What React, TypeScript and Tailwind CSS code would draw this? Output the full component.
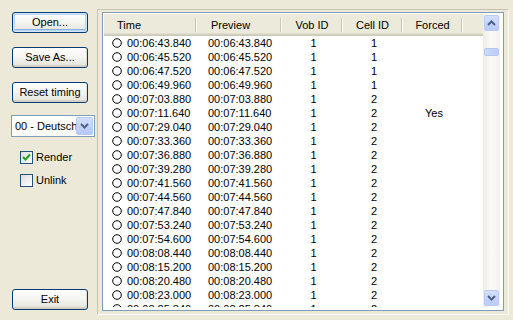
import React from "react";

const rows: [string, string, string, string][] = [
  ["00:06:43.840", "1", "1", ""],
  ["00:06:45.520", "1", "1", ""],
  ["00:06:47.520", "1", "1", ""],
  ["00:06:49.960", "1", "1", ""],
  ["00:07:03.880", "1", "2", ""],
  ["00:07:11.640", "1", "2", "Yes"],
  ["00:07:29.040", "1", "2", ""],
  ["00:07:33.360", "1", "2", ""],
  ["00:07:36.880", "1", "2", ""],
  ["00:07:39.280", "1", "2", ""],
  ["00:07:41.560", "1", "2", ""],
  ["00:07:44.560", "1", "2", ""],
  ["00:07:47.840", "1", "2", ""],
  ["00:07:53.240", "1", "2", ""],
  ["00:07:54.600", "1", "2", ""],
  ["00:08:08.440", "1", "2", ""],
  ["00:08:15.200", "1", "2", ""],
  ["00:08:20.480", "1", "2", ""],
  ["00:08:23.000", "1", "2", ""],
  ["00:08:25.840", "1", "2", ""],
];

function XPButton({ label, isDefault }: { label: string; isDefault?: boolean }) {
  return (
    <button
      className={
        "flex h-[21px] w-[76px] items-center justify-center rounded-[3px] border border-[#003C74] bg-gradient-to-b from-[#FFFFFF] via-[#F4F4F0] to-[#E3E2DA] text-[11px] leading-none text-black " +
        (isDefault
          ? "shadow-[inset_0_0_0_1px_#CEE7FF,inset_0_0_0_2px_#BCD4F6,inset_0_-1px_0_2px_#89ADE4]"
          : "shadow-[inset_0_-2px_0_#D6D0C5,inset_-1px_0_0_#E2DFD6]")
      }
    >
      {label}
    </button>
  );
}

function ChevronUp() {
  return (
    <svg width="9" height="6" viewBox="0 0 9 6">
      <polyline points="1,5 4.5,1.5 8,5" fill="none" stroke="#4D6185" strokeWidth="2" />
    </svg>
  );
}

function ChevronDown() {
  return (
    <svg width="9" height="6" viewBox="0 0 9 6">
      <polyline points="1,1 4.5,4.5 8,1" fill="none" stroke="#4D6185" strokeWidth="2" />
    </svg>
  );
}

function Checkbox({ label, checked }: { label: string; checked?: boolean }) {
  return (
    <div className="flex h-[13px] items-center">
      <div className="flex h-[13px] w-[13px] items-center justify-center border border-[#1C5180] bg-gradient-to-br from-[#DCDCD7] to-[#FFFFFF]">
        {checked && (
          <svg width="9" height="9" viewBox="0 0 9 9">
            <path d="M1 4 L3.5 6.5 L8 1.5" fill="none" stroke="#21A121" strokeWidth="2" />
          </svg>
        )}
      </div>
      <span className="ml-[3px] text-[11px] leading-none text-black">{label}</span>
    </div>
  );
}

function HeaderCell({ w, label, center }: { w: string; label: string; center?: boolean }) {
  return (
    <div className={"flex h-full shrink-0 items-center " + w}>
      <div className={"flex-1 " + (center ? "text-center" : "pl-[13px]")}>{label}</div>
      <div className="flex h-[14px] w-[3px] shrink-0">
        <div className="w-[1px] bg-[#C7C5B2]" />
        <div className="w-[1px] bg-[#FFFFFF]" />
        <div className="w-[1px]" />
      </div>
    </div>
  );
}

export default function App() {
  return (
    <div
      className="flex h-[320px] w-[513px] overflow-hidden bg-[#ECE9D8] text-black"
      style={{ fontFamily: '"Liberation Sans", Arial, sans-serif' }}
    >
      {/* Left column */}
      <div className="flex h-full w-[97px] shrink-0 flex-col pl-[12px] pt-[12px] pb-[10px]">
        <XPButton label="Open..." isDefault />
        <div className="mt-[14px]">
          <XPButton label="Save As..." />
        </div>
        <div className="mt-[14px]">
          <XPButton label="Reset timing" />
        </div>
        <div className="ml-[-1px] mt-[12px] flex h-[22px] w-[84px] items-center border border-[#7F9DB9] bg-white p-[1px]">
          <div className="flex-1 overflow-hidden whitespace-nowrap pl-[2px] text-[11px] leading-none">00 - Deutsch</div>
          <div className="flex h-[18px] w-[17px] shrink-0 items-center justify-center rounded-[2px] border border-[#B9CBF3] bg-gradient-to-b from-[#D2DEFB] to-[#B4C8F6]">
            <ChevronDown />
          </div>
        </div>
        <div className="ml-[8px] mt-[14px] flex flex-col gap-[10px]">
          <Checkbox label="Render" checked />
          <Checkbox label="Unlink" />
        </div>
        <div className="mt-auto">
          <XPButton label="Exit" />
        </div>
      </div>

      {/* Right area */}
      <div className="pt-[9px]">
        <div className="h-[306px] w-[412px] border border-t-[#C5C2B2] border-l-[#C5C2B2] border-r-white border-b-white pl-[4px] pr-[4px] pt-[2px] pb-[3px]">
          <div className="h-[299px] w-[402px] border border-[#7F9DB9] bg-white pl-[1px] pt-[1px] pr-[3px] pb-[3px]">
            <div className="flex h-[293px] w-[396px] text-[11px] leading-none">
              {/* list */}
              <div className="flex w-[379px] flex-col overflow-hidden">
                <div className="flex h-[22px] shrink-0 bg-[#EBEADB] shadow-[inset_0_-1px_0_#CBC7B8,inset_0_-2px_0_#D6D2C2,inset_0_-3px_0_#E2DECD]">
                  <HeaderCell w="w-[94px]" label="Time" />
                  <HeaderCell w="w-[85px]" label="Preview" />
                  <HeaderCell w="w-[61px]" label="Vob ID" center />
                  <HeaderCell w="w-[60px]" label="Cell ID" center />
                  <HeaderCell w="w-[60px]" label="Forced" center />
                </div>
                <div className="flex flex-col">
                  {rows.map((r, i) => (
                    <div key={i} className="flex h-[14px] shrink-0 items-center">
                      <div className="flex w-[94px] shrink-0 items-center pl-[8px]">
                        <svg width="10" height="10" viewBox="0 0 10 10" className="shrink-0">
                          <circle cx="5" cy="5" r="4.3" fill="none" stroke="#000" strokeWidth="1" />
                        </svg>
                        <span className="ml-[5px] whitespace-nowrap">{r[0]}</span>
                      </div>
                      <div className="w-[85px] shrink-0 whitespace-nowrap pl-[10px]">{r[0]}</div>
                      <div className="w-[61px] shrink-0 text-center">{r[1]}</div>
                      <div className="w-[60px] shrink-0 text-center">{r[2]}</div>
                      <div className="w-[60px] shrink-0 text-center">{r[3]}</div>
                    </div>
                  ))}
                </div>
              </div>
              {/* scrollbar */}
              <div className="flex w-[17px] shrink-0 flex-col bg-gradient-to-r from-[#EEEDE5] via-[#FBFBF8] to-[#F3F1EC]">
                <div className="m-[1px] mb-0 flex h-[16px] items-center justify-center rounded-[2px] border border-[#BACCF4] bg-gradient-to-b from-[#D4E0FC] to-[#B8CBF7]">
                  <ChevronUp />
                </div>
                <div className="mx-[1px] mt-[17px] h-[8px] rounded-[2px] border border-[#B3C7F5] bg-gradient-to-r from-[#CAD8FB] to-[#BCCEF8]" />
                <div className="flex-1" />
                <div className="m-[1px] mt-0 flex h-[16px] items-center justify-center rounded-[2px] border border-[#BACCF4] bg-gradient-to-b from-[#D4E0FC] to-[#B8CBF7]">
                  <ChevronDown />
                </div>
              </div>
            </div>
          </div>
        </div>
      </div>
    </div>
  );
}
